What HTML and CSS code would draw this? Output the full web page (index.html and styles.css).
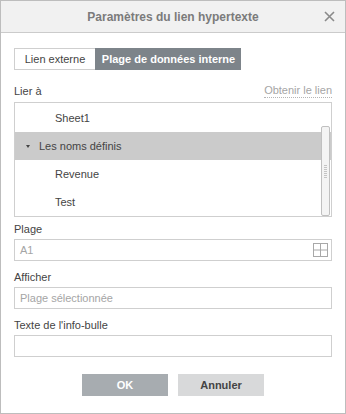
FILE: index.html
```html
<!DOCTYPE html>
<html lang="fr">

<head>
  <meta charset="UTF-8" />
  <title>Paramètres du lien hypertexte</title>
  <link rel="stylesheet" href="styles.css">
</head>

<body>

  <div class="dialog">
    <div class="dialog-header">
      <span class="dialog-title">Paramètres du lien hypertexte</span>
      <span class="close">
        <svg width="11" height="11" viewBox="0 0 11 11">
          <path d="M1 1 L10 10 M10 1 L1 10" stroke="#8a8a8a" stroke-width="1.6" fill="none" />
        </svg>
      </span>
    </div>

    <div class="dialog-body">
      <div class="tabs">
        <div class="tab">Lien externe</div>
        <div class="tab active">Plage de données interne</div>
      </div>

      <div class="label-row">
        <span class="label">Lier à</span>
        <span class="get-link">Obtenir le lien</span>
      </div>

      <div class="tree">
        <div class="tree-item child">Sheet1</div>
        <div class="tree-item group selected"><span class="caret"></span>Les noms définis</div>
        <div class="tree-item child">Revenue</div>
        <div class="tree-item child">Test</div>

        <!-- custom scrollbar -->
        <div class="scroll-thumb">
          <div class="grip"></div>
        </div>
      </div>

      <div class="label field-label">Plage</div>
      <div class="input">
        <span class="placeholder">A1</span>
        <svg class="range-icon" width="15" height="14" viewBox="0 0 15 14">
          <rect x="0.5" y="0.5" width="14" height="13" fill="none" stroke="#a8a8a8" />
          <path d="M7.5 0.5 V13.5 M0.5 7 H14.5" stroke="#a8a8a8" fill="none" />
        </svg>
      </div>

      <div class="label field-label">Afficher</div>
      <div class="input">
        <span class="placeholder">Plage sélectionnée</span>
      </div>

      <div class="label field-label">Texte de l'info-bulle</div>
      <div class="input"></div>

      <div class="footer">
        <button class="btn btn-ok">OK</button>
        <button class="btn btn-cancel">Annuler</button>
      </div>
    </div>
  </div>

</body>

</html>
```

FILE: styles.css
```css
* {
  margin: 0;
  padding: 0;
  box-sizing: border-box;
}

body {
  font-family: 'Liberation Sans', Arial, sans-serif;
  font-size: 11px;
  color: #444;
  background: #fff;
}

.dialog {
  width: 346px;
  height: 414px;
  border: 1px solid #bdbdbd;
  background: #fff;
}

.dialog-header {
  height: 32px;
  background: #f1f1f1;
  border-bottom: 1px solid #cbcbcb;
  display: flex;
  align-items: center;
  justify-content: center;
  position: relative;
}

.dialog-title {
  font-size: 12px;
  font-weight: bold;
  color: #7b7b7b;
}

.close {
  position: absolute;
  right: 10px;
  top: 10px;
  width: 11px;
  height: 11px;
  display: flex;
}

.dialog-body {
  padding: 15px 13px 0 13px;
}

.tabs {
  display: flex;
  height: 22px;
}

.tab {
  display: flex;
  align-items: center;
  justify-content: center;
  flex-shrink: 0;
  white-space: nowrap;
  border: 1px solid #cfcfcf;
  border-right: none;
  background: #fff;
  color: #444;
  width: 81px;
}

.tab.active {
  width: 146px;
  background: #7d848a;
  border-color: #7d848a;
  color: #fff;
  font-weight: bold;
}

.label-row {
  display: flex;
  justify-content: space-between;
  align-items: center;
  margin-top: 14px;
  height: 14px;
}

.label {
  line-height: 14px;
  color: #444;
}

.get-link {
  color: #a5a5a5;
  line-height: 13px;
  border-bottom: 1px dotted #b5b5b5;
}

.tree {
  margin-top: 4px;
  height: 115px;
  border: 1px solid #cfcfcf;
  padding-top: 1px;
  position: relative;
  overflow: hidden;
}

.tree-item {
  height: 28px;
  display: flex;
  align-items: center;
  color: #444;
}

.tree-item.child {
  padding-left: 40px;
}

.tree-item.group {
  padding-left: 11px;
}

.tree-item.selected {
  background: #cbcbcb;
}

.caret {
  width: 0;
  height: 0;
  border-left: 2.5px solid transparent;
  border-right: 2.5px solid transparent;
  border-top: 3px solid #444;
  margin-right: 9px;
}

.scroll-thumb {
  position: absolute;
  right: 1px;
  top: 23px;
  width: 9px;
  height: 90px;
  border: 1px solid #c0c0c0;
  border-radius: 2px;
  background: #f4f4f4;
  display: flex;
  align-items: center;
  justify-content: center;
}

.grip {
  width: 3px;
  height: 13px;
  background: repeating-linear-gradient(to bottom, #c4c4c4 0, #c4c4c4 1px, transparent 1px, transparent 2px);
}

.field-label {
  margin-top: 5px;
}

.field-label + .input {
  margin-top: 3px;
}

.input + .field-label {
  margin-top: 9px;
}

.input {
  height: 22px;
  border: 1px solid #cfcfcf;
  display: flex;
  align-items: center;
  justify-content: space-between;
  padding: 0 3px 0 5px;
}

.placeholder {
  color: #a5a5a5;
}

.range-icon {
  display: block;
}

.footer {
  display: flex;
  justify-content: center;
  gap: 10px;
  margin-top: 17px;
}

.btn {
  width: 86px;
  height: 22px;
  border: none;
  font-family: 'Liberation Sans', Arial, sans-serif;
  font-size: 11px;
  font-weight: bold;
}

.btn-ok {
  background: #a7acb0;
  color: #fff;
}

.btn-cancel {
  background: #d8d9da;
  color: #444;
}
```
